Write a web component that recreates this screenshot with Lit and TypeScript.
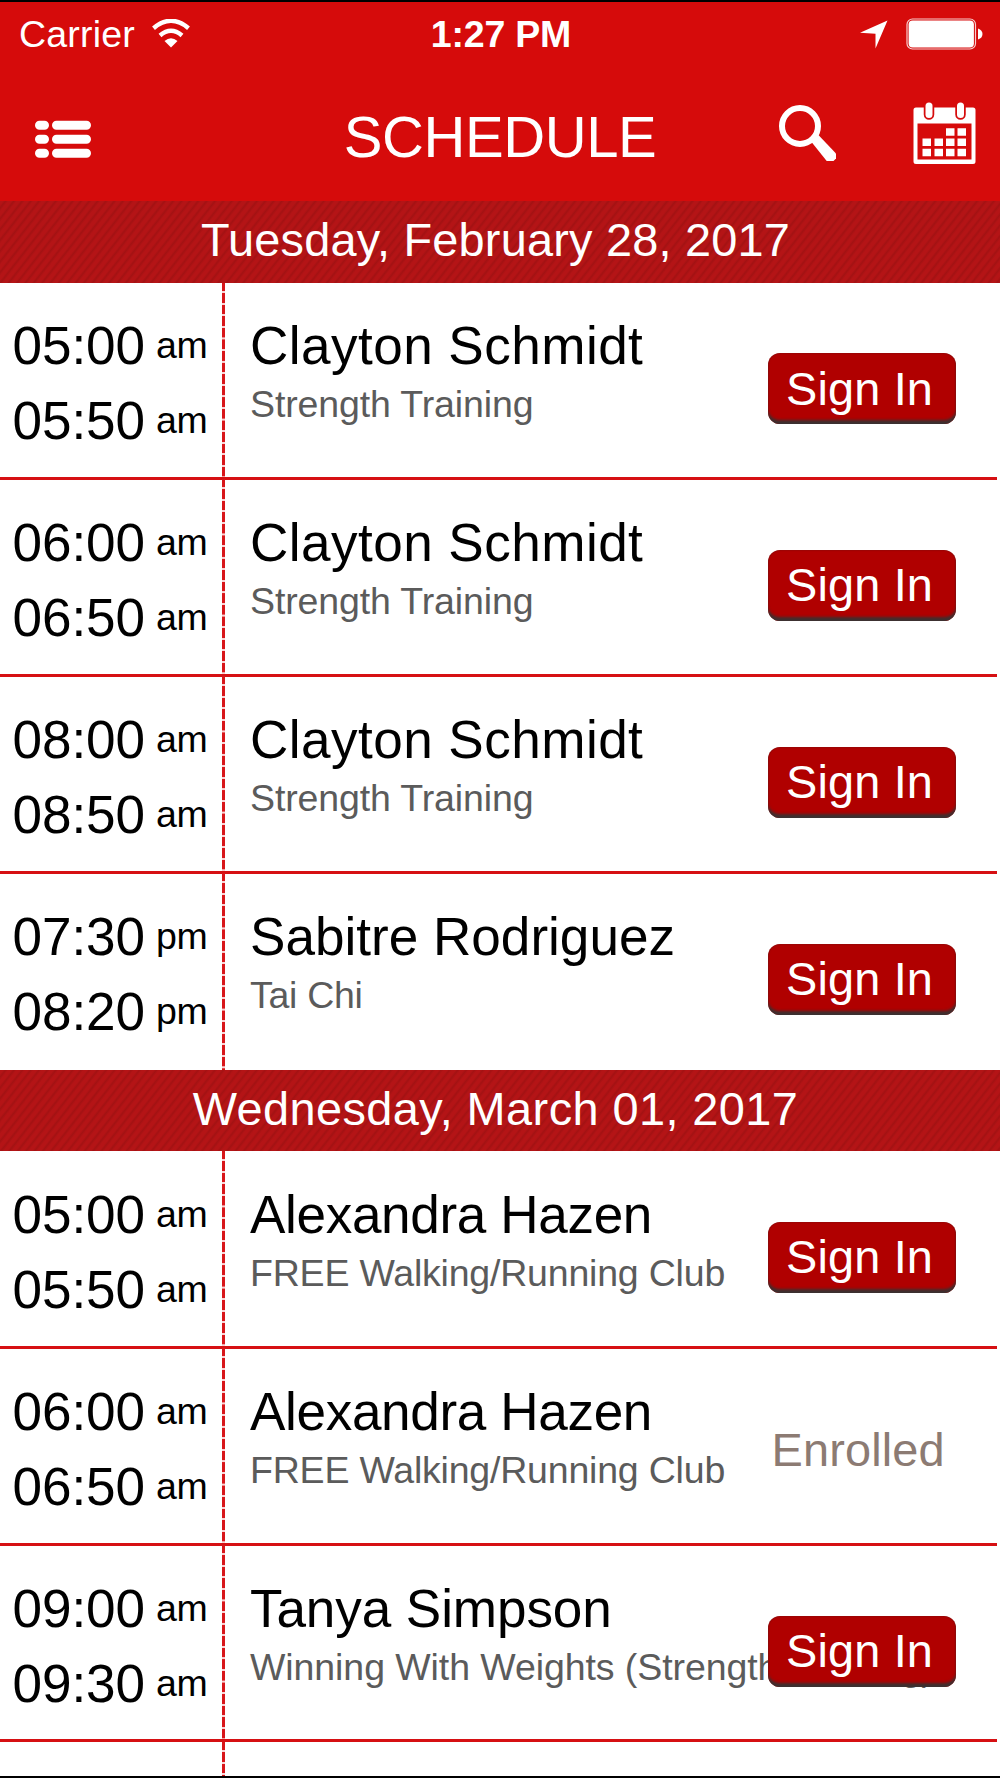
import { LitElement, html, css } from "lit";
import { customElement, property } from "lit/decorators.js";
import { styleMap } from "lit/directives/style-map.js";

interface Session {
  start: string;
  end: string;
  half: "am" | "pm";
  name: string;
  activity: string;
  enrolled?: boolean;
  /** Letter spacing in px of the name and of the activity. */
  tracking: [number, number];
}

interface Day {
  label: string;
  tracking: number;
  sessions: Session[];
}

const clayton = {
  half: "am" as const,
  name: "Clayton Schmidt",
  activity: "Strength Training",
  tracking: [0.45, -0.13] as [number, number],
};

const alexandra = {
  half: "am" as const,
  name: "Alexandra Hazen",
  activity: "FREE Walking/Running Club",
  tracking: [-0.35, -0.2] as [number, number],
};

const DAYS: Day[] = [
  {
    label: "Tuesday, February 28, 2017",
    tracking: 0.2,
    sessions: [
      { ...clayton, start: "05:00", end: "05:50" },
      { ...clayton, start: "06:00", end: "06:50" },
      { ...clayton, start: "08:00", end: "08:50" },
      { start: "07:30", end: "08:20", half: "pm", name: "Sabitre Rodriguez", activity: "Tai Chi", tracking: [0, -0.3] },
    ],
  },
  {
    label: "Wednesday, March 01, 2017",
    tracking: 0.42,
    sessions: [
      { ...alexandra, start: "05:00", end: "05:50" },
      { ...alexandra, start: "06:00", end: "06:50", enrolled: true },
      { start: "09:00", end: "09:30", half: "am", name: "Tanya Simpson", activity: "Winning With Weights (Strength Training)", tracking: [-0.1, -0.08] },
    ],
  },
];

@customElement("session-row")
class SessionRow extends LitElement {
  @property({ attribute: false }) session?: Session;

  static styles = css`
    :host {
      display: flex;
      box-sizing: border-box;
      height: 196.875px;
      position: relative;
      color: #000;
    }
    .times {
      box-sizing: border-box;
      width: 222px;
      flex: none;
      padding: 25.7px 0 0 12.6px;
    }
    .time {
      display: flex;
      align-items: baseline;
      height: 75px;
      line-height: 75px;
      font-size: 53.1px;
      white-space: nowrap;
    }
    .clock {
      width: 143.4px;
      letter-spacing: -0.1px;
    }
    .half {
      font-size: 37.5px;
      letter-spacing: -0.3px;
      position: relative;
      top: -6px;
    }
    .dash {
      width: 3px;
      flex: none;
      background: repeating-linear-gradient(#d8161a 0 8px, #f9d3d4 8.3px 10px, #d8161a 10.3px 11.58px);
    }
    .info {
      flex: 1;
      min-width: 0;
      padding: 32.6px 0 0 25px;
      white-space: nowrap;
    }
    .name {
      font-size: 53.1px;
      line-height: 62px;
    }
    .activity {
      font-size: 37.5px;
      line-height: 44px;
      padding-top: 5px;
      color: #5b5b5b;
    }
    .action {
      position: absolute;
      right: 44px;
      top: 70.5px;
      box-sizing: border-box;
      width: 188px;
      height: 71px;
      border: 0;
      border-radius: 12px;
      padding: 0 0 0 18px;
      text-align: left;
      font: 46.9px/70px "Liberation Sans", Arial, sans-serif;
      letter-spacing: 0.15px;
      color: #fff;
      background: #b00000;
      box-shadow: inset 0 -5px 3px -1px #3c3030, inset 0 0 2px #6a1010;
    }
    .status {
      position: absolute;
      left: 771.5px;
      top: 74.5px;
      font-size: 46.9px;
      line-height: 54px;
      letter-spacing: 0.15px;
      color: #8c7b73;
    }
    .rule {
      position: absolute;
      left: 0;
      right: 3px;
      bottom: -0.5px;
      height: 3px;
      background: #d61013;
    }
    :host([last]) .rule {
      display: none;
    }
  `;

  render() {
    const s = this.session;
    if (!s) return html`<div class="times"></div><div class="dash"></div>`;
    return html`
      <div class="times">
        ${[s.start, s.end].map(
          (t) => html`<div class="time"><span class="clock">${t}</span><span class="half">${s.half}</span></div>`
        )}
      </div>
      <div class="dash"></div>
      <div class="info">
        <div class="name" style=${styleMap({ letterSpacing: `${s.tracking[0]}px` })}>${s.name}</div>
        <div class="activity" style=${styleMap({ letterSpacing: `${s.tracking[1]}px` })}>${s.activity}</div>
      </div>
      ${s.enrolled
        ? html`<span class="status">Enrolled</span>`
        : html`<button class="action">Sign In</button>`}
      <div class="rule"></div>
    `;
  }
}

@customElement("app-root")
class AppRoot extends LitElement {
  static styles = css`
    :host {
      display: block;
      box-sizing: border-box;
      height: 1778px;
      overflow: hidden;
      border-top: 2px solid #000;
      border-bottom: 2px solid #000;
      background: #fff;
      font-family: "Liberation Sans", Arial, sans-serif;
    }
    .top {
      height: 199.25px;
      background: #d60b0b;
      color: #fff;
    }
    .statusbar {
      display: grid;
      grid-template-columns: 1fr auto 1fr;
      align-items: center;
      height: 62px;
      padding: 0 17px 0 19px;
      font-size: 37.5px;
      line-height: 64px;
    }
    .left,
    .right {
      display: flex;
      align-items: center;
    }
    .left {
      gap: 17px;
      letter-spacing: 0.2px;
    }
    .right {
      justify-content: flex-end;
      gap: 18px;
    }
    .clock {
      font-weight: bold;
      letter-spacing: -0.2px;
    }
    .nav {
      display: grid;
      grid-template-columns: 280px 1fr 280px;
      height: 137px;
    }
    .title {
      text-align: center;
      font-size: 58px;
      letter-spacing: -0.4px;
      line-height: 146px;
    }
    .menu {
      margin: 56px 0 0 34px;
    }
    .tools {
      display: flex;
      gap: 77px;
      padding: 37px 0 0 58px;
    }
    svg {
      display: block;
      flex: none;
    }
    .day {
      height: 81.25px;
      line-height: 78.5px;
      text-align: center;
      font-size: 46.9px;
      color: #fff;
      padding-right: 9px;
      background: repeating-linear-gradient(128deg, #b41416 0 2.5px, #a31213 4.4px, #b41416 6.6px);
    }
  `;

  render() {
    const rows = [0.5, 14.5, 28.5];
    return html`
      <header class="top">
        <div class="statusbar">
          <div class="left">
            <span>Carrier</span>
            <svg width="38" height="30" viewBox="0 0 38 30" fill="none" stroke="#fff" stroke-width="4.4">
              <path d="M1.5 9.2Q19-5.6 36.5 9.2" />
              <path d="M8 16.5Q19 7 30 16.5" />
              <path d="M12.500 22Q19 16.500 25.500 22L19 28.500Z" fill="#fff" stroke="none" />
            </svg>
          </div>
          <span class="clock">1:27 PM</span>
          <div class="right">
            <svg width="29" height="29" viewBox="0 0 29 29"><path d="M28.5.5 16.500 28.500V13.800L1 12.800Z" fill="#fff" /></svg>
            <svg width="77" height="32" viewBox="0 0 77 32">
              <rect x="1" y="1" width="68.500" height="30" rx="5.500" fill="none" stroke="#fff" stroke-opacity=".8" stroke-width="1.200" />
              <rect x="2.600" y="2.600" width="65.300" height="26.800" rx="4" fill="#fff" />
              <path d="M72 10.500Q76.500 12 76.500 16T72 21.500Z" fill="#fff" />
            </svg>
          </div>
        </div>
        <nav class="nav">
          <svg class="menu" width="58" height="38" viewBox="0 0 58 38" shape-rendering="geometricPrecision">
            <g fill="#fff" transform="translate(0 .3)">
              <path d="${rows.map((y) => `M5.500 ${y}h5a4.500 4.500 0 0 1 0 9h-5a4.500 4.500 0 0 1 0-9zM22.500 ${y}h30a4.500 4.500 0 0 1 0 9h-30a4.500 4.500 0 0 1 0-9z`).join("")}" />
            </g>
          </svg>
          <div class="title">SCHEDULE</div>
          <div class="tools">
            <svg width="58" height="60" viewBox="0 0 58 60">
              <circle cx="22" cy="25" r="18" fill="none" stroke="#fff" stroke-width="6" />
              <path d="M31.500 38.500 38.500 32 58 52.500V57.500L54.500 61H49.500Z" fill="#fff" />
            </svg>
            <svg width="63" height="64" viewBox="0 0 63 64" fill="#fff">
              <path fill-rule="evenodd" d="M3 6.500H60Q62.500 6.500 62.500 9V60.500Q62.500 63 60 63H3Q.5 63 .5 60.500V9Q.5 6.500 3 6.500ZM4.500 22.500V58.500H58.500V22.500Z" />
              <rect x="12.500" y="1.500" width="7" height="15.500" rx="3.500" stroke="#d60b0b" stroke-width="3.500" paint-order="stroke" />
              <rect x="44" y="1.500" width="7" height="15.500" rx="3.500" stroke="#d60b0b" stroke-width="3.500" paint-order="stroke" />
              <path d="M33 27.300h8.500v7.500H33zM44.500 27.300h8.500v7.500h-8.500zM9.500 37.500H18v7.500H9.500zM21.500 37.500H30v7.500h-8.500zM33 37.500h8.500v7.500H33zM44.500 37.500h8.500v7.500h-8.500zM9.500 47.700H18v7.500H9.500zM21.500 47.700H30v7.500h-8.500zM33 47.700h8.500v7.500H33zM44.500 47.700h8.500v7.500h-8.500z" />
            </svg>
          </div>
        </nav>
      </header>
      ${DAYS.map(
        (d) => html`
          <div class="day" style=${styleMap({ letterSpacing: `${d.tracking}px` })}>${d.label}</div>
          ${d.sessions.map(
            (s, i) => html`<session-row .session=${s} ?last=${d === DAYS[0] && i === d.sessions.length - 1}></session-row>`
          )}
        `
      )}
      <session-row></session-row>
    `;
  }
}
